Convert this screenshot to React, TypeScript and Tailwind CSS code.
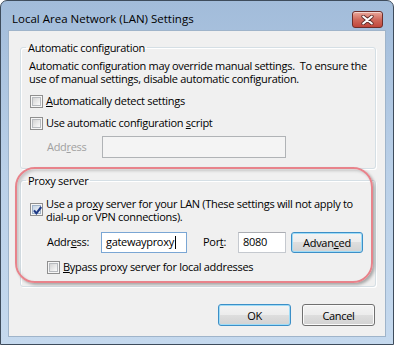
import React from "react";

function Box({ checked = false }: { checked?: boolean }) {
  return (
    <span className="relative flex h-[13px] w-[13px] shrink-0 items-center justify-center border border-[#8f8f8f] bg-[#f6f6f6]">
      <span
        className={`h-[9px] w-[9px] border ${
          checked
            ? "border-[#9fb2c8] bg-gradient-to-br from-[#c4d3e4] to-[#f4f7fb]"
            : "border-[#b7babe] bg-gradient-to-br from-[#d4d4d4] to-[#fbfbfb]"
        }`}
      />
      {checked && (
        <svg className="absolute left-[1px] top-[1px]" width="11" height="11" viewBox="0 0 11 11">
          <path d="M2 5.3 L4.4 8.3 L9.2 2" fill="none" stroke="#1f3a86" strokeWidth="2.1" />
        </svg>
      )}
    </span>
  );
}

function Btn({
  children,
  def = false,
  className = "",
}: {
  children: React.ReactNode;
  def?: boolean;
  className?: string;
}) {
  return (
    <button
      className={`flex items-center justify-center rounded-[3px] border leading-none bg-[linear-gradient(#f4f4f4_0%,#ececec_50%,#dedede_50%,#d2d2d2_100%)] ${
        def
          ? "border-[#3c8fc7] shadow-[inset_0_0_0_1px_#9fdcf7]"
          : "border-[#707070] shadow-[inset_0_0_0_1px_#fbfbfb]"
      } ${className}`}
    >
      {children}
    </button>
  );
}

export default function App() {
  return (
    <div className="h-[345px] w-[394px] bg-white font-['Open_Sans','Noto_Sans',sans-serif] text-[11px] text-black">
      <div className="flex h-full w-full flex-col rounded-t-[7px] border border-[#3e4c5c] bg-gradient-to-b from-[#a2bcda] via-[#bad0e8] to-[#c5d9ee]">
        {/* ── Title bar ─────────────────────────────── */}
        <div className="flex h-[29px] shrink-0 items-start justify-between pl-[11px] pr-[10px]">
          <span className="mt-[10px] text-[11.5px] leading-[15px]">Local Area Network (LAN) Settings</span>
          <div className="mt-[10px] flex h-[17px] w-[31px] items-center justify-center rounded-[3px] border border-[#6e2e2a] bg-gradient-to-b from-[#e9a89c] via-[#d06a5d] to-[#c0463b] shadow-[inset_0_1px_0_rgba(255,255,255,0.5)]">
            <svg width="13" height="10" viewBox="0 0 13 10">
              <path d="M2.2 1.5 L10.8 8.5 M10.8 1.5 L2.2 8.5" stroke="#5b2a27" strokeWidth="3.6" strokeLinecap="round" />
              <path d="M2.2 1.5 L10.8 8.5 M10.8 1.5 L2.2 8.5" stroke="#ffffff" strokeWidth="2.1" strokeLinecap="round" />
            </svg>
          </div>
        </div>

        {/* ── Client area ───────────────────────────── */}
        <div className="relative mx-[7px] mb-[7px] flex flex-1 flex-col whitespace-nowrap border border-[#9fb4ca] bg-[#f0f0f0] tracking-[-0.3px]">
          <fieldset className="ml-[11px] mt-[9px] w-[356px] rounded-[3px] border border-[#d5dfe5] shadow-[inset_1px_1px_0_#fff,1px_1px_0_#fff]">
            <legend className="ml-[5px] px-[2px] leading-[15px]">Automatic configuration</legend>
            <div className="flex flex-col px-[8px] pb-[10px]">
              <p className="mt-[4px] leading-[13px]">
                Automatic configuration may override manual settings.&nbsp; To ensure the
                <br />
                use of manual settings, disable automatic configuration.
              </p>
              <label className="ml-[1px] mt-[9px] flex h-[15px] items-center gap-[3px]">
                <Box />
                <span>
                  <u>A</u>utomatically detect settings
                </span>
              </label>
              <label className="ml-[1px] mt-[7px] flex h-[15px] items-center gap-[3px]">
                <Box />
                <span>
                  Use automatic configuration <u>s</u>cript
                </span>
              </label>
              <div className="mt-[5px] flex h-[22px] items-center">
                <span className="ml-[18px] w-[55px] text-[#a0a0a0]">
                  Add<u>r</u>ess
                </span>
                <div className="h-[22px] w-[184px] border border-[#b0b3b6] bg-[#f4f4f4]" />
              </div>
            </div>
          </fieldset>

          <fieldset className="ml-[11px] mt-[4px] w-[356px] rounded-[3px] border border-[#d5dfe5] shadow-[inset_1px_1px_0_#fff,1px_1px_0_#fff]">
            <legend className="ml-[5px] px-[2px] leading-[15px]">Proxy server</legend>
            <div className="flex flex-col px-[8px] pb-[11px]">
              <label className="ml-[1px] mt-[9px] flex items-start gap-[3px]">
                <span className="mt-[6px]">
                  <Box checked />
                </span>
                <span className="leading-[13px]">
                  Use a pro<u>x</u>y server for your LAN (These settings will not apply to
                  <br />
                  dial-up or VPN connections).
                </span>
              </label>
              <div className="mt-[9px] flex h-[21px] items-center">
                <span className="ml-[18px] w-[54px]">
                  Addr<u>e</u>ss:
                </span>
                <div className="flex h-[21px] w-[86px] items-center border border-[#7aa6d4] bg-white pl-[4px]">
                  gatewayproxy<span className="ml-[1px] h-[13px] w-[1px] bg-black" />
                </div>
                <span className="ml-[16px] w-[35px]">
                  Por<u>t</u>:
                </span>
                <div className="flex h-[21px] w-[48px] items-center border border-[#c5c9cf] border-t-[#abadb3] bg-white pl-[4px]">
                  8080
                </div>
                <Btn def className="ml-[5px] h-[21px] w-[72px]">
                  Advan<u>c</u>ed
                </Btn>
              </div>
              <label className="ml-[18px] mt-[7px] flex h-[15px] items-center gap-[3px]">
                <Box />
                <span>
                  <u>B</u>ypass proxy server for local addresses
                </span>
              </label>
            </div>
          </fieldset>

          <div className="mr-[10px] mt-[17px] flex justify-end gap-[11px]">
            <Btn def className="h-[22px] w-[73px]">
              OK
            </Btn>
            <Btn className="h-[22px] w-[73px]">Cancel</Btn>
          </div>

          {/* highlight annotation drawn over the proxy group */}
          <div className="pointer-events-none absolute left-[6px] top-[136px] h-[116px] w-[358px] rounded-[20px] border-2 border-[#e8838b] shadow-[2px_2px_3px_rgba(0,0,0,0.3),inset_2px_2px_3px_rgba(0,0,0,0.18)]" />
        </div>
      </div>
    </div>
  );
}
